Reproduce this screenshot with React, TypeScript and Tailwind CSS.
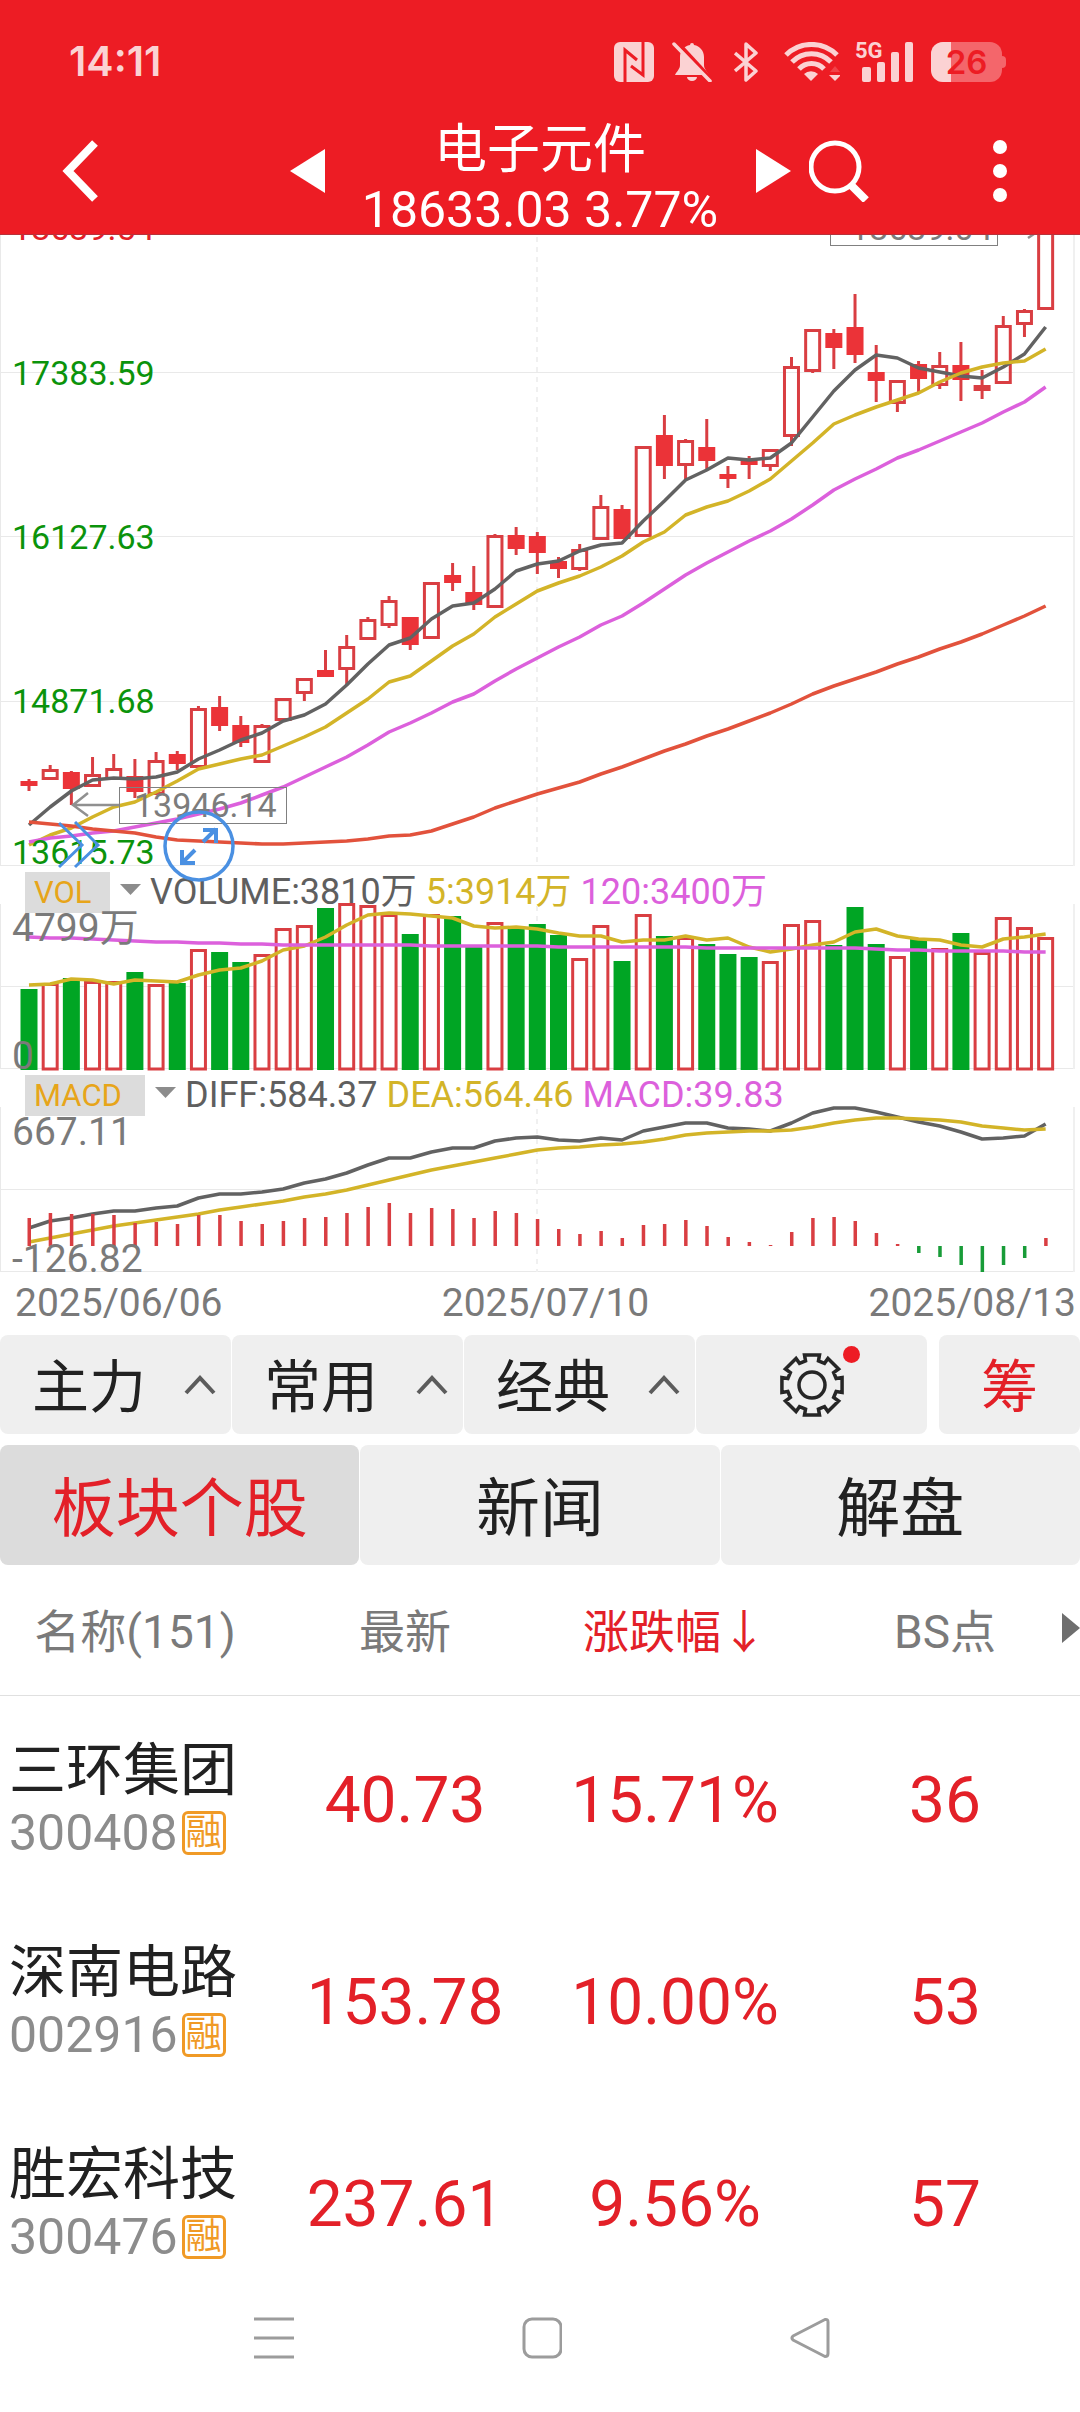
import { useState } from "react";

type Candle = {
  up: boolean;
  high: number;
  top: number;
  bottom: number;
  low: number;
};

type Stock = {
  name: string;
  code: string;
  price: string;
  change: string;
  bs: string;
};

const UP = "#d93e42";
const UP_FILL = "#eb3338";
const DOWN = "#00a524";
const DARK = "#626262";
const YELLOW = "#d3b428";
const PURPLE = "#dc60dc";
const ORANGE = "#e2523c";
const GRID = "#e9e9e9";

const STEP = 21.18;
const xAt = (i: number) => 29 + i * STEP;

const c = (up: number, high: number, top: number, bottom: number, low: number): Candle => ({
  up: up === 1,
  high,
  top,
  bottom,
  low,
});

const CANDLES: Candle[] = [
  c(0, 779, 781, 786, 791), c(1, 765, 769, 780, 780), c(0, 771, 772, 789, 805),
  c(1, 757, 774, 787, 787), c(1, 754, 768, 780, 780), c(0, 759, 776, 792, 798),
  c(1, 752, 760, 795, 795), c(0, 751, 754, 764, 770), c(1, 706, 708, 768, 768),
  c(0, 696, 707, 726, 731), c(0, 716, 725, 743, 747), c(1, 724, 725, 763, 763),
  c(1, 698, 698, 721, 721), c(1, 678, 678, 694, 701), c(0, 650, 670, 677, 677),
  c(1, 635, 646, 670, 685), c(1, 617, 619, 640, 640), c(1, 596, 600, 626, 628),
  c(0, 617, 617, 645, 650), c(1, 582, 582, 639, 639), c(0, 563, 575, 583, 591),
  c(0, 566, 592, 605, 610), c(1, 534, 535, 608, 608), c(0, 527, 535, 549, 555),
  c(0, 532, 536, 553, 574), c(0, 557, 561, 569, 578), c(1, 544, 549, 570, 571),
  c(1, 495, 506, 540, 540), c(0, 505, 509, 539, 539), c(1, 446, 446, 537, 537),
  c(0, 415, 435, 466, 479), c(1, 439, 440, 466, 479), c(0, 419, 447, 461, 470),
  c(0, 466, 474, 479, 488), c(0, 456, 461, 465, 479), c(1, 449, 449, 467, 471),
  c(1, 357, 366, 437, 446), c(1, 329, 329, 372, 373), c(0, 329, 333, 348, 369),
  c(0, 294, 327, 355, 363), c(0, 345, 372, 381, 402), c(1, 380, 380, 404, 412),
  c(0, 361, 364, 379, 394), c(1, 352, 365, 386, 389), c(0, 342, 365, 380, 401),
  c(1, 370, 385, 391, 399), c(1, 316, 325, 384, 384), c(1, 309, 310, 325, 337),
  c(1, 210, 210, 310, 310),
];

const MA5 = [825, 807, 791, 780, 778, 779, 777, 772, 759, 750, 740, 733, 721, 715, 704, 685, 664, 645, 638, 619, 606, 603, 589, 571, 564, 561, 551, 545, 543, 521, 501, 480, 470, 458, 460, 458, 443, 417, 391, 370, 355, 358, 368, 372, 376, 378, 367, 354, 327];
const MA10 = [845, 835, 828, 817, 807, 802, 792, 781, 769, 764, 759, 755, 746, 737, 727, 713, 699, 682, 676, 661, 646, 634, 617, 604, 591, 583, 576, 567, 556, 542, 532, 515, 507, 501, 491, 479, 461, 443, 424, 415, 407, 400, 393, 382, 373, 367, 363, 361, 349];
const MA20 = [842, 838, 836, 833, 831, 827, 823, 819, 814, 809, 803, 795, 787, 777, 767, 757, 745, 732, 723, 713, 702, 694, 681, 669, 658, 647, 637, 625, 616, 603, 589, 575, 563, 552, 541, 531, 519, 505, 490, 479, 469, 458, 450, 441, 432, 423, 412, 402, 387];
const MA60 = [822, 824, 826, 829, 831, 833, 837, 840, 841, 842, 843, 844, 844, 843, 842, 841, 839, 836, 835, 831, 824, 817, 808, 801, 794, 788, 782, 774, 767, 759, 751, 744, 736, 729, 721, 713, 704, 694, 686, 679, 672, 664, 657, 649, 642, 634, 625, 616, 606];

const VOL_TOP = [989, 983, 978, 981, 981, 972, 984, 983, 949, 952, 962, 954, 928, 925, 908, 903, 905, 914, 934, 914, 916, 946, 922, 928, 924, 935, 958, 925, 961, 914, 936, 937, 944, 954, 957, 961, 924, 920, 945, 907, 944, 956, 939, 948, 933, 952, 917, 927, 937];
const VMA5 = [985, 984, 979, 980, 984, 980, 981, 982, 975, 970, 968, 961, 950, 946, 937, 925, 915, 913, 914, 916, 918, 926, 928, 927, 929, 933, 936, 936, 942, 940, 940, 936, 940, 938, 947, 952, 949, 945, 942, 932, 929, 936, 939, 940, 945, 947, 939, 937, 934];
const VMA120 = [937, 938, 938, 939, 940, 941, 942, 942, 943, 943, 944, 944, 945, 945, 945, 945, 945, 945, 945, 946, 946, 946, 946, 946, 946, 947, 947, 947, 947, 947, 947, 947, 948, 948, 948, 948, 948, 948, 948, 948, 949, 950, 950, 951, 951, 951, 951, 952, 952];

const DIFF = [1228, 1221, 1218, 1214, 1211, 1211, 1208, 1206, 1198, 1194, 1194, 1192, 1189, 1183, 1179, 1173, 1165, 1158, 1158, 1152, 1148, 1148, 1141, 1138, 1137, 1140, 1141, 1138, 1140, 1131, 1127, 1123, 1123, 1128, 1129, 1131, 1123, 1113, 1108, 1108, 1112, 1117, 1122, 1126, 1132, 1139, 1138, 1136, 1124];
const DEA = [1242, 1238, 1234, 1230, 1226, 1223, 1220, 1217, 1214, 1210, 1207, 1204, 1201, 1197, 1194, 1190, 1185, 1180, 1175, 1170, 1166, 1162, 1158, 1154, 1150, 1148, 1147, 1145, 1144, 1142, 1139, 1135, 1133, 1132, 1131, 1131, 1130, 1127, 1123, 1120, 1118, 1118, 1119, 1120, 1122, 1126, 1128, 1130, 1129];
const MACD_BARS = [28, 33, 32, 32, 31, 23, 24, 22, 31, 31, 25, 22, 25, 28, 29, 33, 39, 43, 33, 38, 37, 28, 35, 33, 27, 17, 12, 15, 8, 21, 22, 26, 20, 9, 4, 1, 14, 28, 29, 25, 13, 2, -7, -11, -19, -26, -19, -12, 8];

const STOCKS: Stock[] = [
  { name: "三环集团", code: "300408", price: "40.73", change: "15.71%", bs: "36" },
  { name: "深南电路", code: "002916", price: "153.78", change: "10.00%", bs: "53" },
  { name: "胜宏科技", code: "300476", price: "237.61", change: "9.56%", bs: "57" },
];

const MENUS = ["主力", "常用", "经典"];
const TABS = ["板块个股", "新闻", "解盘"];

function Line({ data, color }: { data: number[]; color: string }) {
  return (
    <polyline
      points={data.map((y, i) => `${xAt(i)},${y}`).join(" ")}
      fill="none"
      stroke={color}
      strokeWidth={3.5}
      strokeLinejoin="round"
    />
  );
}

function Grid({ top, bottom, lines }: { top: number; bottom: number; lines: number[] }) {
  return (
    <g stroke={GRID} strokeWidth={1}>
      {lines.map((y) => (
        <line key={y} x1={0} x2={1074} y1={y + 0.5} y2={y + 0.5} />
      ))}
      <line x1={0.5} x2={0.5} y1={top} y2={bottom} />
      <line x1={1074} x2={1074} y1={top} y2={bottom} strokeWidth={2} stroke="#f0f0f0" />
      <line x1={537} x2={537} y1={top + 2} y2={bottom} strokeWidth={2} stroke="#f0f0f0" strokeDasharray="5 5" />
    </g>
  );
}

function StatusBar() {
  return (
    <div className="flex h-[124px] items-center justify-between pl-[69px] pr-[74px] text-[#fbd2d3]">
      <span className="font-[Inter] text-[41px] font-semibold">14:11</span>
      <div className="flex items-center">
        <svg width="40" height="40" viewBox="0 0 40 40" className="mr-[18px]" aria-label="NFC">
          <rect width="40" height="40" rx="6" fill="currentColor" />
          <path d="M11 40V8l12 10M29 0v33L17 24" fill="none" stroke="#ed1c24" strokeWidth="3" />
        </svg>
        <svg width="40" height="40" viewBox="0 0 40 40" className="mr-[22px]" aria-label="静音">
          <path d="M20 1a2 2 0 0 1 2 2c6 1 10 6 10 12v8c0 4 3 6 5 10H3c2-4 5-6 5-10v-8C8 9 12 4 18 3a2 2 0 0 1 2-2Z" fill="currentColor" />
          <path d="M15 35h10a5 4 0 0 1-10 0Z" fill="currentColor" />
          <path d="M5 0 41 39" stroke="#ed1c24" strokeWidth="4" />
          <path d="M2 2 38 39" stroke="currentColor" strokeWidth="3.5" strokeLinecap="round" />
        </svg>
        <svg width="24" height="40" viewBox="0 0 24 40" className="mr-[26px]" aria-label="蓝牙">
          <path d="M1 11 22 29 12 38V2l10 9L1 29" fill="none" stroke="currentColor" strokeWidth="3.5" strokeLinejoin="round" />
        </svg>
        <svg width="56" height="40" viewBox="0 0 56 40" className="mr-[16px]" aria-label="Wi-Fi">
          <g fill="none" stroke="currentColor" strokeWidth="5">
            <path d="M2 13a36 36 0 0 1 51 0" />
            <path d="M8 20a27 27 0 0 1 39 0" />
            <path d="M15 27a17 17 0 0 1 25 0" />
          </g>
          <path d="M27 39l-7-7a10 10 0 0 1 14 0Z" fill="currentColor" />
          <path d="M46 30l5-6 5 6Z" fill="#f14349" />
          <path d="M45 33h12l-6 6Z" fill="currentColor" />
        </svg>
        <svg width="58" height="42" viewBox="0 0 58 42" className="mr-[17px] overflow-visible" aria-label="5G">
          <text x="-1" y="17" className="font-[Roboto] text-[22px] font-bold" fill="currentColor">5G</text>
          <g fill="currentColor">
            <rect x="6" y="26" width="9" height="15" rx="2" />
            <rect x="21" y="21" width="8" height="20" rx="2" />
            <rect x="35" y="11" width="8" height="30" rx="2" />
            <rect x="49" y="1" width="8" height="40" rx="2" />
          </g>
        </svg>
        <div className="flex items-center">
          <div className="relative h-10 w-[71px] overflow-hidden rounded-xl bg-[#f4666b]">
            <div className="h-full w-5 bg-[#fbd2d3]" />
            <span className="absolute inset-0 text-center font-[Inter] text-[33px] leading-10 font-semibold text-[#ed1c24]">
              26
            </span>
          </div>
          <div className="h-3 w-1 rounded-r-full bg-[#f4666b]" />
        </div>
      </div>
    </div>
  );
}

function AppBar() {
  return (
    <div className="grid h-[111px] grid-cols-[1fr_431px_1fr] items-start border-b border-[#b8323a] text-white">
      <div className="flex items-center justify-between pt-4 pl-[62px]">
        <button aria-label="返回">
          <svg width="36" height="62" viewBox="0 0 36 62">
            <path d="M33 3 6 31l27 28" fill="none" stroke="currentColor" strokeWidth="8" />
          </svg>
        </button>
        <button aria-label="上一个">
          <svg width="35" height="44" viewBox="0 0 35 44">
            <path d="M35 0v44L0 22Z" fill="currentColor" />
          </svg>
        </button>
      </div>
      <div className="text-center">
        <h1 className="-mt-1 text-[53px] leading-[60px]">电子元件</h1>
        <p className="text-[50px] leading-[60px]">18633.03 3.77%</p>
      </div>
      <div className="flex items-center pt-4 pr-[73px]">
        <button aria-label="下一个">
          <svg width="35" height="44" viewBox="0 0 35 44">
            <path d="M0 0v44l35-22Z" fill="currentColor" />
          </svg>
        </button>
        <button aria-label="搜索" className="ml-[18px]">
          <svg width="60" height="62" viewBox="0 0 60 62" fill="none" stroke="currentColor">
            <circle cx="26" cy="27" r="24" strokeWidth="5" />
            <path d="M42 45l15 15" strokeWidth="8" />
          </svg>
        </button>
        <button aria-label="更多" className="ml-auto">
          <svg width="14" height="62" viewBox="0 0 14 62" fill="currentColor">
            <circle cx="7" cy="7" r="7" />
            <circle cx="7" cy="31" r="7" />
            <circle cx="7" cy="55" r="7" />
          </svg>
        </button>
      </div>
    </div>
  );
}

function PriceChart() {
  return (
    <div className="relative">
      <svg viewBox="0 235 1080 631" className="block h-auto w-full overflow-visible">
        <Grid top={235} bottom={866} lines={[372, 536, 701, 865]} />
        {CANDLES.map((k, i) => (
          <g key={i} stroke={UP} strokeWidth={3}>
            {k.high < k.top && <line x1={xAt(i)} x2={xAt(i)} y1={k.high} y2={k.top} />}
            {k.low > k.bottom && <line x1={xAt(i)} x2={xAt(i)} y1={k.bottom} y2={k.low} />}
            {k.up ? (
              <rect x={xAt(i) - 7} y={k.top + 1.5} width={14} height={k.bottom - k.top - 3} fill="none" />
            ) : (
              <rect x={xAt(i) - 8.5} y={k.top} width={17} height={k.bottom - k.top} fill={UP_FILL} stroke="none" />
            )}
          </g>
        ))}
        <Line data={MA5} color={DARK} />
        <Line data={MA10} color={YELLOW} />
        <Line data={MA20} color={PURPLE} />
        <Line data={MA60} color={ORANGE} />

        <g className="text-[34px]" fill="#0b930b">
          <text x={12} y={240} fill="#e32028">18639.54</text>
          <text x={12} y={385}>17383.59</text>
          <text x={12} y={549}>16127.63</text>
          <text x={12} y={713}>14871.68</text>
          <text x={12} y={864}>13615.73</text>
        </g>

        {/* low / high markers */}
        <g fill="none" stroke="#808080">
          <rect x={119.5} y={787.5} width={167} height={36} />
          <rect x={830.5} y={209.5} width={167} height={36} />
          <path d="M119 805H74M88 793 73 805l15 11" stroke="#909090" strokeWidth={2.5} />
          <path d="M998 228h45M1028 238l15-10-15-12" stroke="#909090" strokeWidth={2.5} />
        </g>
        <g className="text-[34px]" fill="#7c7c7c">
          <text x={134} y={817}>13946.14</text>
          <text x={850} y={240}>18639.04</text>
        </g>
      </svg>

      <button aria-label="展开" className="absolute bottom-[-3px] left-[58px]">
        <svg width="42" height="48" viewBox="0 0 42 48" className="block" fill="none" stroke="#4a90e2" strokeWidth="3">
          <path d="M1 2l23 22L1 46M17 1l23 23-23 22" />
        </svg>
      </button>
      <button aria-label="全屏" className="absolute -bottom-4 left-[163px] z-10">
        <svg width="72" height="72" viewBox="0 0 72 72" className="block" fill="none" stroke="#4a90e2">
          <circle cx="36" cy="36" r="34" strokeWidth="3.5" />
          <path d="M40 32l13-13M40 20h13v13M32 40 19 53M19 40v13h13" strokeWidth="4" />
        </svg>
      </button>
    </div>
  );
}

function VolumeChart() {
  return (
    <svg viewBox="0 904 1080 167" className="block h-auto w-full overflow-visible">
      <Grid top={904} bottom={1069} lines={[986, 1068]} />
      {VOL_TOP.map((y, i) =>
        CANDLES[i].up ? (
          <rect key={i} x={xAt(i) - 7} y={y + 1.5} width={14} height={1067.5 - y} fill="#fff" stroke={UP} strokeWidth={3} />
        ) : (
          <rect key={i} x={xAt(i) - 8.5} y={y} width={17} height={1070 - y} fill={DOWN} />
        )
      )}
      <Line data={VMA5} color={YELLOW} />
      <Line data={VMA120} color={PURPLE} />
      <g className="text-[39px]" fill="#7a7a7a">
        <text x={12} y={941}>4799万</text>
        <text x={12} y={1069}>0</text>
      </g>
    </svg>
  );
}

function MacdChart() {
  return (
    <svg viewBox="0 1107 1080 166" className="block h-auto w-full overflow-visible">
      <Grid top={1107} bottom={1272} lines={[1189, 1271]} />
      <Line data={DIFF} color={DARK} />
      <Line data={DEA} color={YELLOW} />
      {MACD_BARS.map((h, i) => (
        <rect
          key={i}
          x={xAt(i) - 1.5}
          y={h > 0 ? 1246 - h : 1246}
          width={3.5}
          height={Math.abs(h)}
          fill={h > 0 ? UP : "#189c38"}
        />
      ))}
      <g className="text-[39px]" fill="#7a7a7a">
        <text x={12} y={1145}>667.11</text>
        <text x={12} y={1272}>-126.82</text>
      </g>
    </svg>
  );
}

function Triangle() {
  return (
    <svg width="21" height="11" viewBox="0 0 21 11" className="pointer-events-none mt-3 shrink-0">
      <path d="M0 0h21L10.500 11Z" fill="#8c8c8c" />
    </svg>
  );
}

function Gear() {
  const points: string[] = [];
  for (let t = 0; t < 8; t++) {
    const mid = t * 45;
    for (const [r, off] of [[25, -15], [31, -14], [31, 14], [25, 15]]) {
      const a = ((mid + off) * Math.PI) / 180;
      points.push(`${33 + r * Math.sin(a)},${33 - r * Math.cos(a)}`);
    }
  }
  return (
    <svg width="66" height="66" viewBox="0 0 66 66" fill="none" stroke="#262626" strokeWidth="3.5">
      <polygon points={points.join(" ")} />
      <circle cx="33" cy="33" r="13" />
    </svg>
  );
}

export default function App() {
  const [tab, setTab] = useState(0);

  return (
    <div className="w-full bg-white [font-family:Roboto,'Noto_Sans_CJK_SC',sans-serif] text-[#212121]">
      <header className="relative z-20 bg-[#ed1c24]">
        <StatusBar />
        <AppBar />
      </header>

      <main>
        <PriceChart />

        <div className="flex h-[38px] items-start pt-[6px] pl-[25px] text-[36px] leading-10 whitespace-nowrap">
          <select
            aria-label="指标一"
            className="mr-[10px] h-[41px] w-[85px] shrink-0 appearance-none bg-[#dcdcdc] pl-[9px] text-[31px] leading-10 text-[#e7a51a]"
          >
            <option>VOL</option>
          </select>
          <Triangle />
          <p className="ml-[9px] text-[#5f5f5f]">
            VOLUME:3810万 <span className="text-[#d3b428]">5:3914万</span>{" "}
            <span className="text-[#dc60dc]">120:3400万</span>
          </p>
        </div>
        <VolumeChart />

        <div className="flex h-[36px] items-start pt-1 pl-[25px] text-[36px] leading-10 whitespace-nowrap">
          <select
            aria-label="指标二"
            className="mr-[10px] h-[41px] w-[120px] shrink-0 appearance-none bg-[#dcdcdc] pl-[9px] text-[31px] leading-10 text-[#e7a51a]"
          >
            <option>MACD</option>
          </select>
          <Triangle />
          <p className="ml-[9px] text-[#5f5f5f]">
            DIFF:584.37 <span className="text-[#d3b428]">DEA:564.46</span>{" "}
            <span className="text-[#dc60dc]">MACD:39.83</span>
          </p>
        </div>
        <MacdChart />

        <div className="flex h-[62px] items-center justify-between pr-1 pb-[2px] pl-[15px] text-[39px] text-[#7a7a7a]">
          <span>2025/06/06</span>
          <span>2025/07/10</span>
          <span>2025/08/13</span>
        </div>

        <div className="grid h-[99px] grid-cols-[1fr_1fr_1fr_1fr_152px] gap-px text-[57px]">
          {MENUS.map((m) => (
            <button
              key={m}
              className="flex items-center justify-between rounded-lg bg-[#efefef] pr-[15px] pl-8"
            >
              <span className="pt-[6px]">{m}</span>
              <svg width="32" height="20" viewBox="0 0 32 20">
                <path d="M2 18 16 3l14 15" fill="none" stroke="#5c5c5c" strokeWidth="4" />
              </svg>
            </button>
          ))}
          <button aria-label="设置" className="flex items-center justify-center rounded-lg bg-[#efefef]">
            <span className="relative">
              <Gear />
              <span className="absolute -top-[6px] -right-[15px] size-[17px] rounded-full bg-[#ed1c24]" />
            </span>
          </button>
          <button className="ml-[11px] rounded-lg bg-[#efefef] pt-[6px] text-[#e32028]">筹</button>
        </div>

        <div className="mt-[11px] grid h-[120px] grid-cols-3 gap-px text-[64px]">
          {TABS.map((t, i) => (
            <button
              key={t}
              onClick={() => setTab(i)}
              className={
                tab === i
                  ? "rounded-lg bg-[#dcdcdc] pt-[10px] text-[#e32028]"
                  : "rounded-lg bg-[#efefef] pt-[10px] text-[#212121]"
              }
            >
              {t}
            </button>
          ))}
        </div>

        <table className="w-full table-fixed">
          <thead>
            <tr className="h-[130px] border-b border-[#e0e0e0] text-[46px] text-[#7a7a7a]">
              <th className="pt-[6px] font-normal">名称(151)</th>
              <th className="pt-[6px] font-normal">最新</th>
              <th className="pt-[6px] font-normal text-[#e32028]">
                <button>涨跌幅↓</button>
              </th>
              <th className="relative pt-[6px] font-normal">
                BS点
                <svg width="18" height="30" viewBox="0 0 18 30" className="absolute top-12 right-0">
                  <path d="M0 0v30l18-15Z" fill="#6e6e6e" />
                </svg>
              </th>
            </tr>
          </thead>
          <tbody>
            {STOCKS.map((s) => (
              <tr key={s.code} className="h-[202px] text-center text-[64px] text-[#e32028]">
                <td className="pt-[10px] pl-[9px] text-left">
                  <p className="text-[57px] leading-[64px] text-[#212121]">{s.name}</p>
                  <p className="flex items-center gap-1 text-[50px] leading-[60px] text-[#8c8c8c]">
                    {s.code}
                    <span className="flex size-11 items-center justify-center rounded-md border-3 border-[#f09a26] text-[36px] leading-none text-[#f09a26]">
                      融
                    </span>
                  </p>
                </td>
                <td className="pt-[10px]">{s.price}</td>
                <td className="pt-[10px]">{s.change}</td>
                <td className="pt-[10px]">{s.bs}</td>
              </tr>
            ))}
          </tbody>
        </table>
      </main>

      <nav className="flex h-[110px] items-start justify-center gap-[228px] pt-4 pl-1">
        <button aria-label="最近任务">
          <svg width="40" height="42" viewBox="0 0 40 42" stroke="#9c9c9c" strokeWidth="3">
            <path d="M0 2h40M0 21h40M0 40h40" />
          </svg>
        </button>
        <button aria-label="主屏幕">
          <svg width="40" height="42" viewBox="0 0 40 42" fill="none" stroke="#9c9c9c" strokeWidth="3">
            <rect x="2" y="2" width="37" height="38" rx="8" />
          </svg>
        </button>
        <button aria-label="后退">
          <svg width="40" height="42" viewBox="0 0 40 42" fill="none" stroke="#9c9c9c" strokeWidth="3" strokeLinejoin="round">
            <path d="M35 2.500 3 19q-2 2 0 4l32 16.500q3 0 3-3V5q0-3-3-2.500Z" />
          </svg>
        </button>
      </nav>
    </div>
  );
}
